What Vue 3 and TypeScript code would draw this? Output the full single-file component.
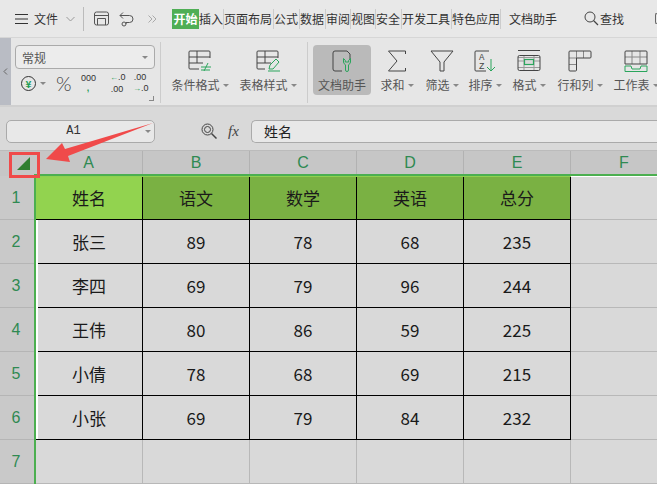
<script setup lang="ts">
const tabs = [
  { t: '插入', w: 25 }, { t: '页面布局', w: 50 }, { t: '公式', w: 26 }, { t: '数据', w: 26 },
  { t: '审阅', w: 25 }, { t: '视图', w: 25 }, { t: '安全', w: 26 }, { t: '开发工具', w: 50 }, { t: '特色应用', w: 49 },
]
const cols = ['A', 'B', 'C', 'D', 'E', 'F']
const head = ['姓名', '语文', '数学', '英语', '总分']
const rows = [
  ['张三', '89', '78', '68', '235'],
  ['李四', '69', '79', '96', '244'],
  ['王伟', '80', '86', '59', '225'],
  ['小倩', '78', '68', '69', '215'],
  ['小张', '69', '79', '84', '232'],
]
</script>

<template>
  <div class="app">
    <header class="top">
      <svg class="ic" width="15" height="12" viewBox="0 0 15 12"><path d="M1 1.500h13M1 6h13M1 10.500h13" stroke="#333" fill="none"/></svg>
      <span class="file">文件</span>
      <svg width="9" height="6" viewBox="0 0 9 6" class="chev"><path d="M.5 1l4 4 4-4" stroke="#999" fill="none"/></svg>
      <i class="vsep"></i>
      <svg class="save" width="15" height="15" viewBox="0 0 15 15"><path d="M.5 3a2 2 0 0 1 2-2h10a2 2 0 0 1 2 2v9a2 2 0 0 1-2 2h-10a2 2 0 0 1-2-2zM.5 4.500h14M3.500 14V7.500h8V14" stroke="#555" fill="none"/></svg>
      <svg class="undo" width="16" height="16" viewBox="0 0 16 16"><path d="M1 4.500h9.500a3.500 3.500 0 0 1 0 7H7v1.500M4 1.500L1 4.500l3 3" stroke="#555" fill="none"/><circle cx="5" cy="13" r="2" stroke="#555" fill="none"/></svg>
      <svg class="more" width="9" height="8" viewBox="0 0 9 8"><path d="M.5 .5L4 4 .5 7.500M4.500 .5L8 4 4.500 7.500" stroke="#aaa" fill="none"/></svg>
      <span class="tab active">开始</span>
      <span v-for="x in tabs" :key="x.t" class="tab sep" :style="{ width: x.w + 'px' }">{{ x.t }}</span>
      <span class="tab helper">文档助手</span>
      <svg class="search" width="15" height="15" viewBox="0 0 15 15"><circle cx="6" cy="6" r="5" stroke="#444" fill="none"/><path d="M9.500 9.500l4.500 4.500" stroke="#444" stroke-width="1.300"/></svg>
      <span class="tab find">查找</span>
      <i class="edge"></i>
    </header>

    <section class="ribbon">
      <div class="strip"><svg width="5" height="7" viewBox="0 0 5 7"><path d="M4 .5l-3 3 3 3" stroke="#666" fill="none"/></svg></div>
      <div class="numfmt">
        <div class="combo"><span>常规</span><b class="tri"></b></div>
        <div class="fmtrow">
          <span class="yuan">¥</span><b class="tri"></b>
          <span class="pct">%</span>
          <span class="stack k"><em>000</em><em class="g">,</em></span>
          <span class="stack s1"><em><u>←</u>.0</em><em>.00</em></span>
          <span class="stack s2"><em>.00</em><em><u>→</u>.0</em></span>
        </div>
        <i class="corner"></i>
      </div>
      <div class="group cond">
        <div class="tool">
          <svg width="24" height="22" viewBox="0 0 24 22"><path d="M22 8V2a1 1 0 0 0-1-1H2a1 1 0 0 0-1 1v16a1 1 0 0 0 1 1h9M1 7h21M1 13h14M9 1v12" stroke="#444" fill="none"/><path d="M13 17h10M13 20h9M20 13l-4 8" stroke="#2aa55c" fill="none"/></svg>
          <span class="lab">条件格式<b class="tri small"></b></span>
        </div>
        <div class="tool">
          <svg width="24" height="22" viewBox="0 0 24 22"><path d="M22 8V2a1 1 0 0 0-1-1H2a1 1 0 0 0-1 1v16a1 1 0 0 0 1 1h7M1 7h21M1 13h14M9 1v12" stroke="#444" fill="none"/><path d="M12 21h12M13 19l1-4 6-6 3 3-6 7z" stroke="#2aa55c" fill="none"/></svg>
          <span class="lab">表格样式<b class="tri small"></b></span>
        </div>
      </div>
      <div class="group right">
        <div class="tool assist">
          <svg width="20" height="22" viewBox="0 0 20 22"><path d="M10 21H3a2 2 0 0 1-2-2V3a2 2 0 0 1 2-2h12l3 3v6" stroke="#444" fill="none"/><path d="M11.500 8.500v3.500a3.500 3.500 0 0 0 2 2.800V20a1.500 1.500 0 0 0 1.500 1.500h0a1.500 1.500 0 0 0 1.500-1.500v-5.200a3.500 3.500 0 0 0 2-2.800V8.500l-1.800 1.800v1.700h-3.400v-1.700z" stroke="#2aa55c" fill="none"/></svg>
          <span class="lab">文档助手</span>
        </div>
        <div class="tool sum">
          <svg width="20" height="22" viewBox="0 0 20 22"><path d="M18.500 4V1H1.500L10 11 1.500 21h17v-3" stroke="#444" fill="none"/></svg>
          <span class="lab">求和<b class="tri small"></b></span>
        </div>
        <div class="tool filter">
          <svg width="24" height="22" viewBox="0 0 24 22"><path d="M1 1h22l-9 11v9h-4v-9z" stroke="#444" fill="none"/></svg>
          <span class="lab">筛选<b class="tri small"></b></span>
        </div>
        <div class="tool order">
          <svg width="24" height="22" viewBox="0 0 24 22"><path d="M16 1H3a1 1 0 0 0-1 1v18a1 1 0 0 0 1 1h10" stroke="#444" fill="none"/><text x="6" y="9.500" class="az">A</text><text x="6" y="19" class="az">Z</text><path d="M18 9v12M14 17l4 4 4-4" stroke="#2aa55c" fill="none"/></svg>
          <span class="lab">排序<b class="tri small"></b></span>
        </div>
        <div class="tool fmt">
          <svg width="24" height="22" viewBox="0 0 24 22"><path d="M1 7.500h22M1 17.500h22M7 5v16M17 5v16M1 11h22" stroke="#999" fill="none"/><path d="M1 .5h22M2.500 5.500h19a1.500 1.500 0 0 1 1.500 1.500v12a1.500 1.500 0 0 1-1.500 1.500h-19A1.500 1.500 0 0 1 1 19V7a1.500 1.500 0 0 1 1.500-1.500z" stroke="#444" fill="none"/><rect x="7.500" y="9.500" width="9" height="5" fill="#d9d9d9" stroke="#2aa55c" stroke-width="1.200"/></svg>
          <span class="lab">格式<b class="tri small"></b></span>
        </div>
        <div class="tool rc">
          <svg width="24" height="22" viewBox="0 0 24 22"><path d="M8.500 1v7M15.500 1v7M1 8h7M1 14.500h7" stroke="#888" fill="none"/><path d="M1 2a1 1 0 0 1 1-1h20a1 1 0 0 1 1 1v5a1 1 0 0 1-1 1H8.500v12a1 1 0 0 1-1 1H2a1 1 0 0 1-1-1z" stroke="#444" fill="none"/></svg>
          <span class="lab">行和列<b class="tri small"></b></span>
        </div>
        <div class="tool sheet">
          <svg width="24" height="22" viewBox="0 0 24 22"><path d="M1 7h22M8 1v13M16 1v13" stroke="#888" fill="none"/><path d="M1 14V2a1 1 0 0 1 1-1h20a1 1 0 0 1 1 1v12z" stroke="#444" fill="none"/><path d="M1 16v5.500h22V16h-6l-1 3H8l-1-3z" stroke="#2aa55c" fill="none"/></svg>
          <span class="lab">工作表<b class="tri small"></b></span>
        </div>
      </div>
    </section>

    <section class="formula">
      <div class="namebox"><span>A1</span><b class="tri"></b></div>
      <svg class="zoomq" width="16" height="16" viewBox="0 0 16 16"><circle cx="6.500" cy="6.500" r="5.500" stroke="#444" fill="none"/><circle cx="6.500" cy="6.500" r="3" stroke="#444" fill="none"/><path d="M10.500 10.500l5 5" stroke="#444" stroke-width="1.500"/></svg>
      <span class="fx">fx</span>
      <div class="input">姓名</div>
    </section>

    <section class="sheetgrid">
      <div class="corner-cell"><i class="selall"></i></div>
      <div v-for="c in cols" :key="c" class="colhead">{{ c }}</div>

      <div class="rowhead">1</div>
      <div v-for="(h, i) in head" :key="h" class="cell th" :class="{ first: i === 0 }">{{ h }}</div>
      <div class="cell blank"></div>

      <template v-for="(r, ri) in rows" :key="ri">
        <div class="rowhead">{{ ri + 2 }}</div>
        <div v-for="(v, ci) in r" :key="ci" class="cell td" :class="{ name: ci === 0 }">{{ v }}</div>
        <div class="cell blank"></div>
      </template>

      <div class="rowhead">7</div>
      <div v-for="c in cols" :key="'b' + c" class="cell blank"></div>

      <i class="sel-top"></i>
      <i class="sel-light"></i>
      <i class="sel-white-h"></i>
      <i class="sel-white-v"></i>
      <i class="sel-left"></i>
    </section>

    <i class="redbox"></i>
    <svg class="arrow" width="657" height="200" viewBox="0 0 657 200"><polygon points="46,159 62,143 65,149 153,123 68,156 70,162" fill="#f04a4a"/></svg>
  </div>
</template>

<style>
html, body { margin: 0; padding: 0; background: #d9d9d9; overflow: hidden; }
</style>

<style scoped>
.app { position: relative; width: 657px; height: 484px; overflow: hidden; font-family: "Noto Sans CJK SC", "Liberation Sans", sans-serif; color: #333; font-size: 12px; }
.top { height: 38px; box-sizing: border-box; background: #e8e8e8; border-bottom: 1px solid #d6d6d6; display: flex; align-items: center; padding-left: 14px; }
.top > * { flex: none; }
.file { margin-left: 5px; width: 24px; white-space: nowrap; }
.chev { margin-left: 8px; }
.vsep { width: 1px; height: 24px; background: #bbb; margin-left: 8px; }
.save { margin-left: 10px; }
.undo { margin-left: 10px; }
.more { margin-left: 13px; margin-right: 15px; }
.tab { white-space: nowrap; display: block; line-height: 20px; height: 20px; }
.tab.active { width: 27px; background: #4fae55; color: #fff; text-align: center; font-weight: 700; }
.tab.sep { box-sizing: border-box; border-right: 1px solid #ccc; }
.helper { margin-left: 8px; }
.search { margin-left: 27px; }
.find { margin-left: 1px; }
.edge { width: 8px; height: 11px; margin-left: 31px; box-sizing: border-box; border: 1px solid #666; border-right: 0; border-radius: 2px 0 0 2px; }

.ribbon { height: 67px; background: #e6e6e6; display: flex; position: relative; border-bottom: 2px solid #d0d0d0; }
.ribbon > *, .group > * { flex: none; }
.strip { width: 11px; background: #b9bcc4; display: flex; align-items: center; justify-content: center; }
.numfmt { width: 150px; box-sizing: border-box; padding: 3px 0 0 4px; position: relative; border-right: 1px solid #ccc; margin: 4px 0 2px 0; }
.combo { width: 140px; height: 24px; box-sizing: border-box; border: 1px solid #aaa; border-radius: 4px; background: #ececec; display: flex; align-items: center; justify-content: space-between; padding: 0 6px; color: #555; }
.tri { display: inline-block; width: 0; height: 0; border: 3px solid transparent; border-top: 3px solid #888; border-bottom: 0; }
.tri.small { margin-left: 3px; vertical-align: 3px; }
.fmtrow { display: flex; align-items: center; margin-top: 2px; height: 24px; padding-left: 6px; }
.yuan { width: 15px; height: 15px; box-sizing: border-box; border: 1px solid #333; border-radius: 50%; display: flex; align-items: center; justify-content: center; font-size: 10px; color: #1f9d55; font-weight: 700; margin-right: 4px; }
.pct { font: 300 20px/1 Lato, sans-serif; margin-left: 10px; width: 16px; color: #444; }
.stack { display: flex; flex-direction: column; font: 9px/10.500px "Liberation Sans", sans-serif; width: 14px; text-align: center; white-space: nowrap; }
.k { margin-left: 9px; }
.s1 { margin-left: 15px; }
.s2 { margin-left: 9px; }
.stack em { font-style: normal; }
.stack u { text-decoration: none; color: #1f9d55; font-size: 8px; }
.stack .g { color: #1f9d55; font-weight: 700; font-size: 9px; }
.corner { position: absolute; right: 6px; bottom: 2px; width: 4px; height: 4px; border-right: 1px solid #888; border-bottom: 1px solid #888; }
.group { display: flex; }
.tool { display: flex; flex-direction: column; align-items: center; box-sizing: border-box; padding-top: 12px; gap: 4px; white-space: nowrap; }
.lab { line-height: 18px; color: #555; }
.cond { width: 147px; padding-left: 9px; box-sizing: border-box; border-right: 1px solid #ccc; margin: 4px 0 2px; gap: 8px; }
.cond .tool { padding-top: 8px; width: 60px; }
.right { margin-left: 5px; }
.assist { width: 58px; height: 50px; background: #bababa; border-radius: 4px; margin-top: 7px; padding-top: 5px; gap: 4px; }
.sum { width: 52px; }
.filter { width: 38px; }
.order { width: 48px; }
.fmt { width: 40px; }
.rc { width: 62px; }
.sheet { width: 50px; }
.az { font: 9px "Liberation Mono", monospace; fill: #444; }

.formula { height: 44px; background: #d9d9d9; display: flex; align-items: center; box-sizing: border-box; padding: 5px 0 0 6px; border-bottom: 1px solid #bbb; }
.namebox { width: 149px; height: 23px; box-sizing: border-box; border: 1px solid #aaa; border-radius: 5px; background: #e8e8e8; display: flex; align-items: center; font-family: "Liberation Mono", monospace; position: relative; justify-content: center; padding-right: 14px; color: #333; }
.namebox .tri { position: absolute; right: 3px; top: 9px; }
.zoomq { margin-left: 46px; }
.fx { margin-left: 11px; font: italic 15px "Liberation Serif", serif; color: #444; width: 20px; }
.input { flex: 1; height: 23px; margin-left: 3px; box-sizing: border-box; border: 1px solid #aaa; border-right: 0; border-radius: 5px 0 0 5px; background: #e8e8e8; padding-left: 12px; line-height: 21px; font-size: 14px; color: #222; }

.sheetgrid { position: relative; display: grid; grid-template-columns: 35px 108px 107px 107px 107px 107px 107px; grid-template-rows: 25px 44px 44px 44px 44px 44px 44px 44px; }
.corner-cell { background: #c6c6c6; }
.colhead { background: #c6c6c6; color: #2f8a52; font: 16px "Liberation Sans", sans-serif; display: flex; align-items: center; justify-content: center; border-right: 1px solid #b2b2b2; box-sizing: border-box; padding-bottom: 2px; }
.rowhead { background: #c9c9c9; color: #2f8a52; font: 16px "Liberation Sans", sans-serif; display: flex; align-items: center; justify-content: center; border-bottom: 1px solid #b5b5b5; box-sizing: border-box; padding: 1px 3px 0 0; }
.cell { box-sizing: border-box; display: flex; align-items: center; justify-content: center; font-size: 17px; color: #1a1a1a; background: #d9d9d9; border-right: 1px solid #000; border-bottom: 1px solid #000; }
.cell.th { background: #7ab143; }
.cell.first { background: #92d34f; padding-left: 1px; }
.cell.name { padding-left: 1px; }
.cell.blank { border-color: #b8b8b8; }

.sel-left { position: absolute; left: 34px; top: 23px; bottom: 0; width: 2px; background: #4caf50; }
.sel-top { position: absolute; left: 34px; top: 23px; right: 0; height: 2px; background: #4caf50; }
.sel-light { position: absolute; left: 36px; top: 25px; width: 535px; height: 1px; background: #8fd14f; }
.sel-white-h { position: absolute; left: 571px; top: 25px; right: 0; height: 1px; background: #fff; }
.sel-white-v { position: absolute; left: 36px; top: 69px; width: 2px; height: 219px; background: #fff; }

.selall { display: block; width: 0; height: 0; margin: 6px 0 0 17px; border-style: solid; border-width: 0 0 13px 13px; border-color: transparent transparent #317f31 transparent; }
.redbox { position: absolute; left: 9px; top: 152px; width: 31px; height: 26px; box-sizing: border-box; border: 3px solid #f04a4a; }
.arrow { position: absolute; left: 0; top: 0; pointer-events: none; }
</style>
